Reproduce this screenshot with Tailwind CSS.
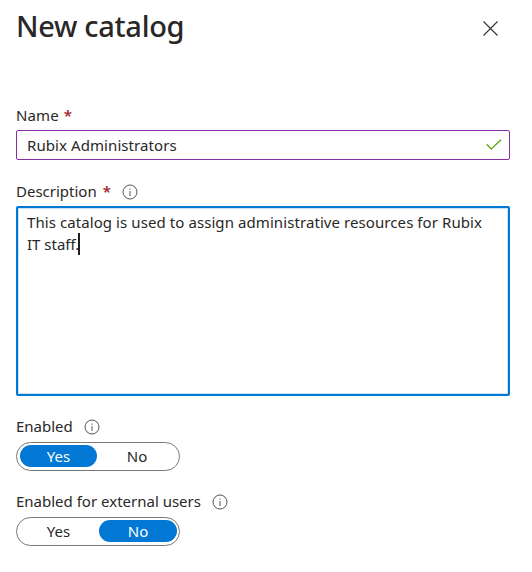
<!DOCTYPE html>
<html lang="en">
<head>
<meta charset="utf-8">
<title>New catalog</title>
<script src="https://cdn.jsdelivr.net/npm/@tailwindcss/browser@4"></script>
</head>
<body class="bg-white">
<svg class="hidden">
  <symbol id="info" viewBox="0 0 16 16"><circle cx="8" cy="8" r="7" fill="none" stroke="#55534f" stroke-width="1"/><path d="M7.5 4.5h1v1.2h-1zM7.5 7h1v5h-1z" fill="#55534f"/></symbol>
</svg>
<main class="flex h-[572px] w-[532px] flex-col overflow-hidden pl-4 pr-[22px] font-['Noto_Sans','Open_Sans',sans-serif] text-[15px] leading-[22px] text-[#292827]">
  <header class="flex h-[104px] justify-between">
    <h1 class="mt-[6px] text-[29px] leading-[40px] font-[550] tracking-[-0.3px] whitespace-nowrap">New catalog</h1>
    <button class="mt-[20px] mr-[11px] size-4" aria-label="Close"><svg class="size-4" viewBox="0 0 16 16" fill="none" stroke="#323130" stroke-width="1.1"><path d="M.5 1.5L14.5 15.5M14.5 1.5L.5 15.5"/></svg></button>
  </header>
  <label class="flex h-[26px] gap-[5px]"><span class="tracking-[0.1px]">Name</span><span class="font-semibold text-[#a4262c]">*</span></label>
  <div class="flex h-[30px] items-center justify-between rounded-[2px] border border-[#8a2da5] pr-[7px] pl-[10px]">
    <span class="tracking-[0.08px]">Rubix Administrators</span>
    <svg class="h-3 w-4" viewBox="0 0 16 12" fill="none" stroke="#57a300" stroke-width="1.2"><path d="M.8 5.5L5.3 10L15 .8"/></svg>
  </div>
  <label class="mt-5 flex h-[26px]"><span>Description</span><span class="ml-[6px] font-semibold text-[#a4262c]">*</span><svg class="ml-[11px] mt-[4px] size-4"><use href="#info"/></svg></label>
  <div class="h-[190px] rounded-[2px] border-2 border-[#0078d4] pt-[3px] pl-[9px] whitespace-nowrap shadow-[inset_0_0_0_1px_#c7e0f4]">
    <p class="tracking-[0.08px]">This catalog is used to assign administrative resources for Rubix</p>
    <p class="flex"><span class="-mr-px">IT staff.</span><span class="h-[22px] w-[2px] bg-[#201f1e]"></span></p>
  </div>
  <label class="mt-[19px] flex h-[27px]"><span>Enabled</span><svg class="ml-[11px] mt-[4px] size-4"><use href="#info"/></svg></label>
  <div class="flex h-[29px] w-[164px] justify-between rounded-full border border-[#7a7875] px-[3px] py-[2px] text-center">
    <span class="h-[22px] w-[77px] rounded-full bg-[#0078d4] text-white">Yes</span><span class="w-[78px]">No</span>
  </div>
  <label class="mt-[19px] flex h-[27px]"><span>Enabled for external users</span><svg class="ml-[11px] mt-[4px] size-4"><use href="#info"/></svg></label>
  <div class="flex h-[29px] w-[164px] justify-between rounded-full border border-[#7a7875] px-[2px] py-[2px] text-center">
    <span class="w-[79px]">Yes</span><span class="h-[22px] w-[78px] rounded-full bg-[#0078d4] text-white">No</span>
  </div>
</main>
</body>
</html>
